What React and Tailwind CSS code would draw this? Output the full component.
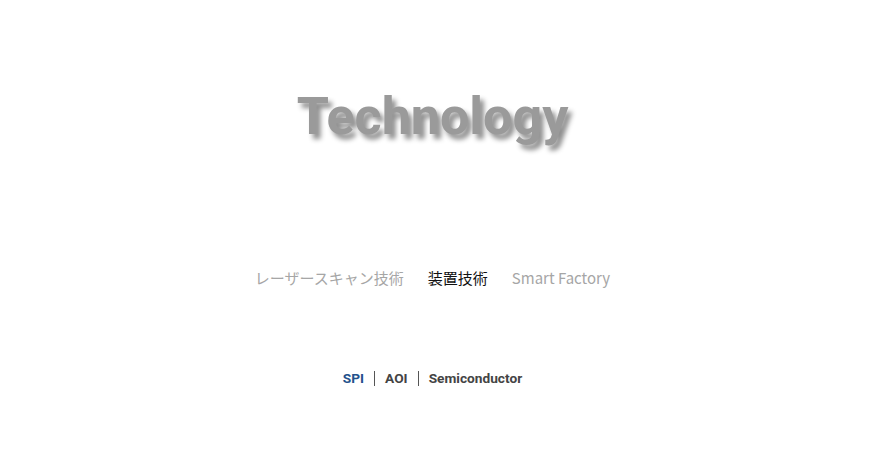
import React, { useState } from 'react';

const tabs = ['レーザースキャン技術', '装置技術', 'Smart Factory'];
const subs = ['SPI', 'AOI', 'Semiconductor'];

export default function App() {
  const [active, setActive] = useState(1);
  const [sub, setSub] = useState(0);

  return (
    <div className="w-full min-h-[476px] bg-white pr-[26px] flex flex-col items-center">
      {/* Title */}
      <h1
        className="mt-[85px] text-[52px] leading-[64px] font-bold text-[#9a9a9a] [text-shadow:4px_5px_5px_rgba(0,0,0,0.45)]"
        style={{ fontFamily: 'Roboto, "Liberation Sans", sans-serif' }}
      >
        Technology
      </h1>

      {/* Main tabs */}
      <div
        className="mt-[117px] flex items-center gap-[24px] text-[15px] leading-[24px]"
        style={{ fontFamily: '"Noto Sans CJK JP", "Noto Sans", sans-serif' }}
      >
        {tabs.map((t, i) => (
          <button
            key={t}
            onClick={() => setActive(i)}
            className={i === active ? 'text-[#111]' : 'text-[#a6a6a6]'}
          >
            {t}
          </button>
        ))}
      </div>

      {/* Sub tabs */}
      <div
        className="mt-[79px] flex items-center text-[13.7px] leading-[18px] font-bold"
        style={{ fontFamily: 'Roboto, "Liberation Sans", sans-serif' }}
      >
        {subs.map((s, i) => (
          <React.Fragment key={s}>
            {i > 0 && <span className="mx-[10px] h-[15px] w-px bg-[#555]" />}
            <button
              onClick={() => setSub(i)}
              className={i === sub ? 'text-[#24528c]' : 'text-[#444]'}
            >
              {s}
            </button>
          </React.Fragment>
        ))}
      </div>
    </div>
  );
}
